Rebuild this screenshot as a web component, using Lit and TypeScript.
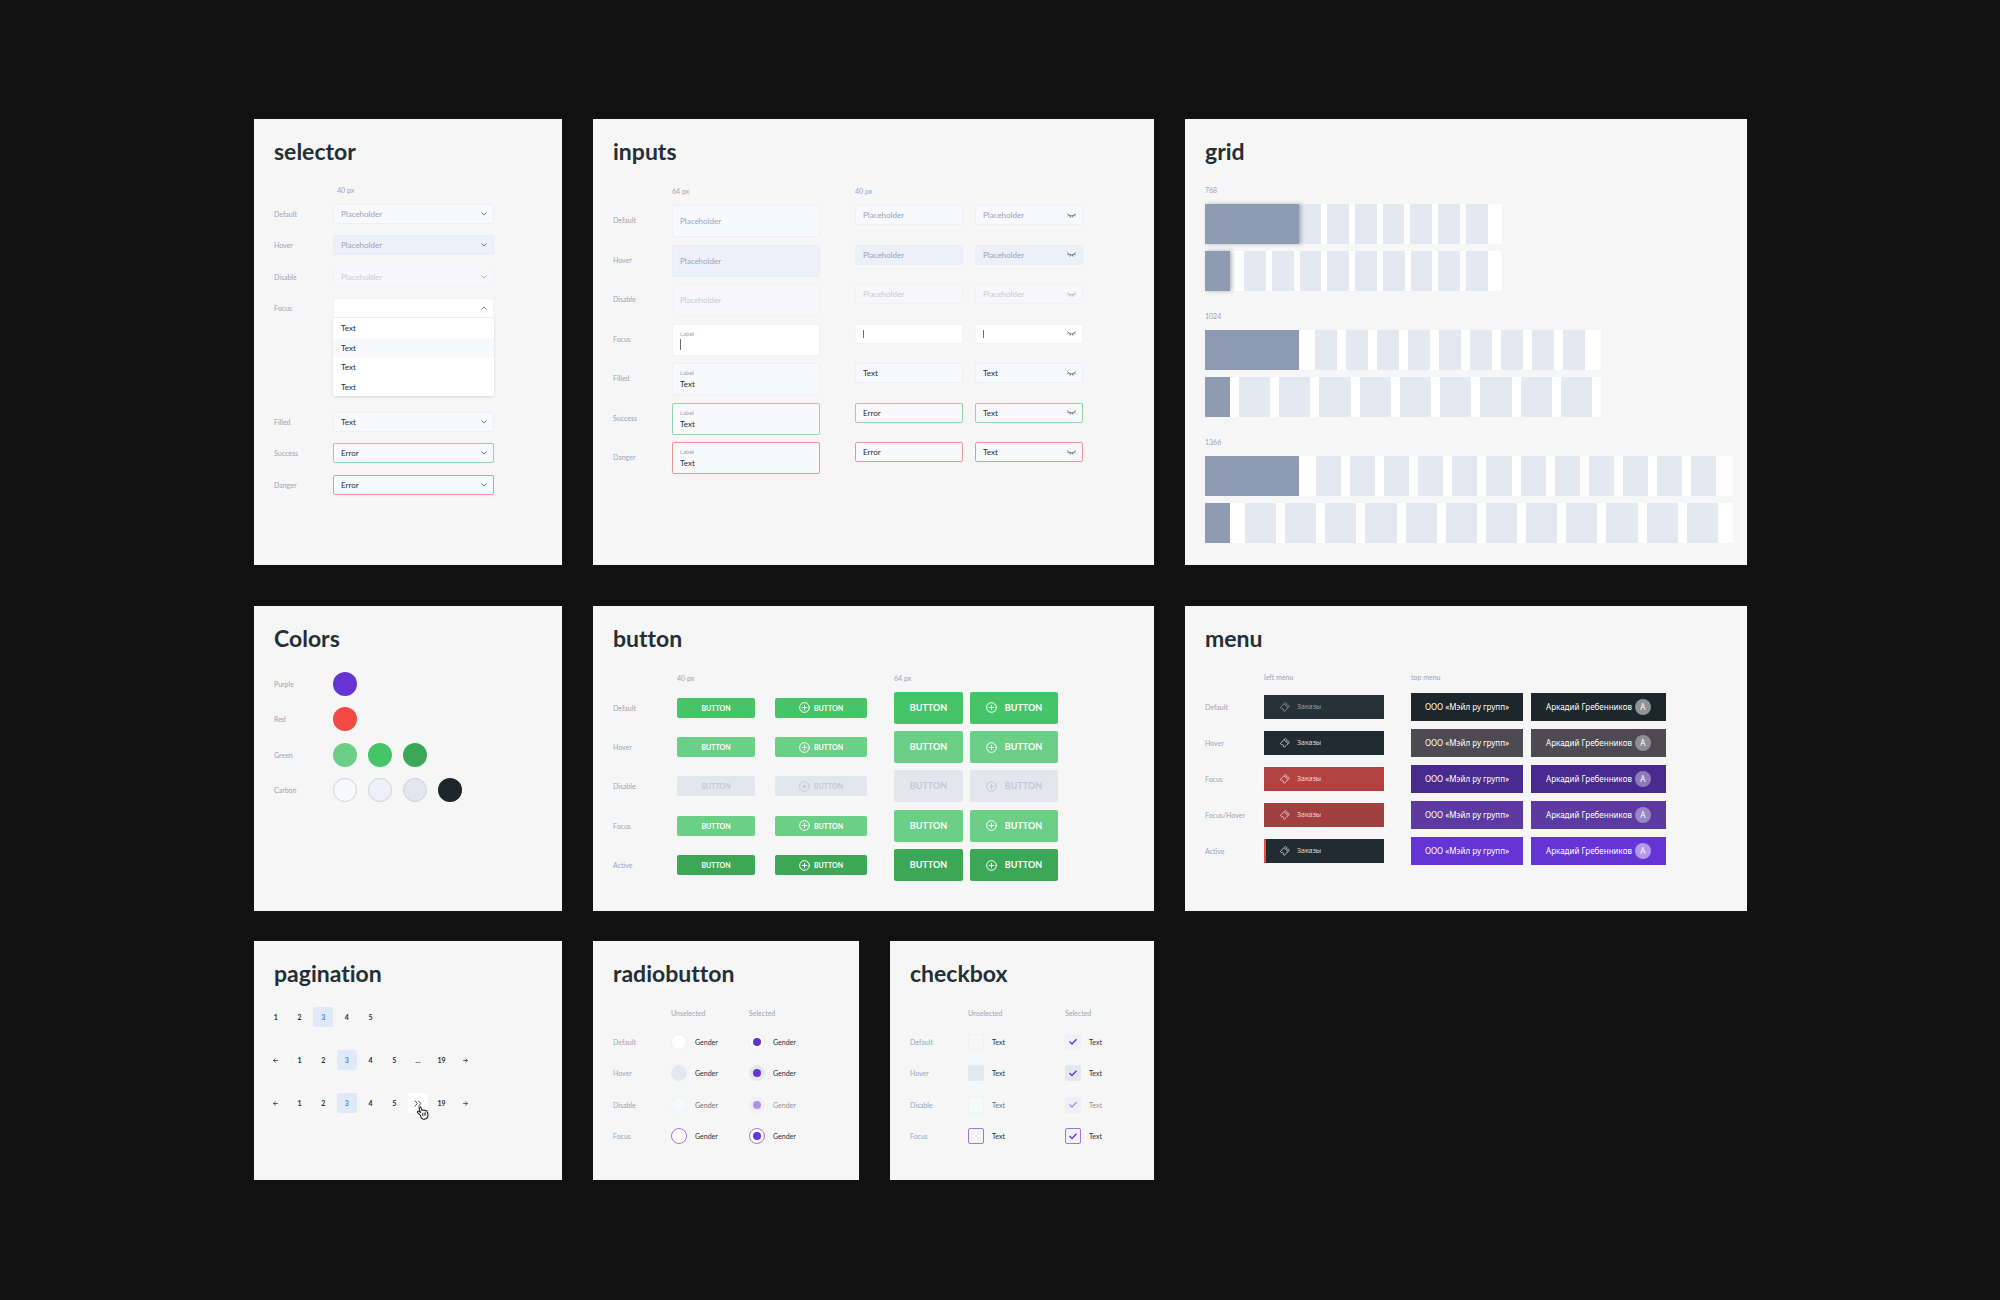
import { LitElement, html, css, svg, nothing } from "lit";
import { customElement } from "lit/decorators.js";
import { classMap } from "lit/directives/class-map.js";
import { styleMap } from "lit/directives/style-map.js";

type Field = { label: string; state: string; value?: string; small?: string; masked?: string };

const fields: Field[] = [
  { label: "Default", state: "default" },
  { label: "Hover", state: "hover" },
  { label: "Disable", state: "disable" },
  { label: "Focus", state: "focus", value: "" },
  { label: "Filled", state: "filled", value: "Text", small: "Text", masked: "Text" },
  { label: "Success", state: "success", value: "Text", small: "Error", masked: "Text" },
  { label: "Danger", state: "danger", value: "Text", small: "Error", masked: "Text" },
];

const breakpoints = [
  {
    name: "768",
    width: 297,
    raised: true,
    bars: [
      { side: 94, count: 7, gap: 6, left: 0, right: 14 },
      { side: 25, count: 9, gap: 6, left: 14, right: 14 },
    ],
  },
  {
    name: "1024",
    width: 396,
    raised: false,
    bars: [
      { side: 94, count: 9, gap: 9, left: 16, right: 16 },
      { side: 25, count: 9, gap: 9, left: 9, right: 9 },
    ],
  },
  {
    name: "1366",
    width: 528,
    raised: false,
    bars: [
      { side: 94, count: 12, gap: 9, left: 17, right: 17 },
      { side: 25, count: 12, gap: 9, left: 15, right: 15 },
    ],
  },
];

const swatches = [
  { label: "Purple", colors: ["#6633d4"] },
  { label: "Red", colors: ["#f24a43"] },
  { label: "Green", colors: ["#6bd086", "#45c567", "#3ba757"] },
  { label: "Carbon", colors: ["#f8f9fd", "#edf0f8", "#e4e6ee", "#1c262b"] },
];

const buttonStates = ["Default", "Hover", "Disable", "Focus", "Active"];
const menuStates = [
  { label: "Default", state: "default" },
  { label: "Hover", state: "hover" },
  { label: "Focus", state: "focus" },
  { label: "Focus/Hover", state: "focus-hover" },
  { label: "Active", state: "active" },
];
const choiceStates = ["Default", "Hover", "Disable", "Focus"];

const chevron = svg`<path d="M1.5 1.5 6 6l4.500-4.500" fill="none" stroke="currentColor" stroke-width="1.600" stroke-linecap="round" stroke-linejoin="round"/>`;

const plusIcon = html`<svg class="plus" viewBox="0 0 22 22" aria-hidden="true">
  <g fill="none" stroke="currentColor" stroke-width="2" stroke-linecap="round">
    <circle cx="11" cy="11" r="9.700" />
    <path d="M11 6.500v9M6.500 11h9" />
  </g>
</svg>`;

const eyeIcon = html`<svg viewBox="0 0 18 10" aria-hidden="true">
  <g fill="none" stroke="currentColor" stroke-width="1.600" stroke-linecap="round">
    <path d="M1 1.500C3 4.400 5.600 5.800 9 5.800s6-1.400 8-4.300" />
    <path d="M3.200 3.800 1.300 5.600M6.800 5.800 6.100 8.500M11.200 5.800l.7 2.700M14.800 3.800l1.900 1.800" />
  </g>
</svg>`;

const ticketIcon = html`<svg class="ticket" viewBox="0 0 20 20" aria-hidden="true">
  <g fill="none" stroke="currentColor" stroke-width="1.600" stroke-linejoin="round" stroke-linecap="round">
    <path d="M11.500 1.200 13.600 3.300a1.900 1.900 0 0 0 2.700 2.700l2.500 2.500L8.600 18.700l-2.300-2.300a1.900 1.900 0 0 0-2.700-2.700L1.200 11.400z" />
    <path d="M8.900 4.200l6.800 6.800" />
  </g>
</svg>`;

const arrow = (back: boolean) => html`<svg class="arrow" viewBox="0 0 10 10" aria-hidden="true">
  <path
    d=${back ? "M9 5H1.500M4.800 1.500 1.300 5l3.500 3.500" : "M1 5h7.500M5.200 1.500 8.700 5 5.200 8.500"}
    fill="none" stroke="currentColor" stroke-width="1.500" stroke-linecap="round" stroke-linejoin="round"
  />
</svg>`;

const skipIcon = html`<svg class="skip" viewBox="0 0 14 12" aria-hidden="true">
  <path d="M1.500 1l4.500 5-4.500 5M7.500 1 12 6l-4.500 5" fill="none" stroke="currentColor" stroke-width="1.500" />
</svg>`;

const handIcon = html`<svg class="hand" viewBox="0 0 24 26" aria-hidden="true">
  <path
    d="M8.500 17.500 3.200 12.600c-1.700-1.800.4-4 2.300-2.700l2.800 2.200L5.600 3.900c-.6-2.300 2.500-3.200 3.400-1l2.400 5.400c.8-1.400 2.700-1.200 3.300.1.900-1.100 2.600-.8 3.100.6 1-.8 2.600-.3 2.900 1.100l1.400 5.200c.7 3.600-.9 6.900-3.900 8.400-3.600 1.600-7.300.6-9-2.300z"
    fill="#fff" stroke="#222" stroke-width="2" stroke-linejoin="round"
  />
  <path d="M12.300 13.500v4.500M15.200 13v4.500M18 12.500v4.500" stroke="#222" stroke-width="1.500" stroke-linecap="round" />
</svg>`;

@customElement("app-root")
export class AppRoot extends LitElement {
  static styles = css`
    :host {
      display: block;
      box-sizing: border-box;
      min-height: 100vh;
      padding: 119px 253px 119px 254px;
      background: #111;
      color: #242f35;
      font-family: Lato, "Noto Sans", sans-serif;
      font-size: 8px;
      line-height: 12px;
      font-variant-ligatures: none;
    }
    *,
    *::before,
    *::after {
      box-sizing: border-box;
    }
    h2,
    ul {
      margin: 0;
      padding: 0;
    }
    .board {
      display: grid;
      grid-template-columns: minmax(0, 308fr) minmax(0, 561fr) minmax(0, 562fr);
      column-gap: 31px;
    }
    .board.second {
      margin-top: 41px;
    }
    .board.third {
      margin-top: 30px;
    }
    .pair {
      display: grid;
      grid-template-columns: minmax(0, 266fr) minmax(0, 264fr);
      column-gap: 31px;
    }
    .panel {
      background: #f6f6f6;
      padding: 19px 0 22px 20px;
    }
    .panel.tall {
      padding-bottom: 26px;
    }
    .panel.roomy {
      padding-bottom: 28px;
    }
    .title {
      font-size: 23px;
      line-height: 27px;
      font-weight: 700;
    }
    .caption,
    .name {
      color: #9aa3ba;
      font-size: 7px;
      line-height: 12px;
    }
    .name {
      align-self: center;
    }
    .head {
      display: grid;
      margin-top: 19px;
    }
    .rows {
      display: grid;
      grid-auto-rows: 1fr;
      align-items: center;
    }

    /* selector */
    .select-cols {
      grid-template-columns: 59px 161px;
    }
    .select-head {
      padding-left: 63px;
    }
    .four {
      min-height: 126px;
      margin-top: 2px;
    }
    .after-menu {
      min-height: 95px;
      margin-top: 82px;
    }
    .field {
      position: relative;
      display: flex;
      align-items: center;
      height: 20px;
      border: 1px solid #eef0f8;
      border-radius: 2px;
      background: #f8f9fd;
      color: #242f35;
    }
    .field input,
    .field select {
      appearance: none;
      flex: 1;
      min-width: 0;
      height: 100%;
      margin: 0;
      padding: 0 7px;
      border: 0;
      outline: 0;
      background: none;
      color: inherit;
      font: inherit;
      opacity: 1;
    }
    .field input::placeholder {
      color: #97a2bb;
      opacity: 1;
    }
    .field select.blank {
      color: #97a2bb;
    }
    .field svg {
      position: absolute;
      right: 6px;
      width: 9px;
      height: 5px;
      color: #4a5560;
      pointer-events: none;
    }
    .field .chevron {
      width: 6px;
      height: 4px;
    }
    .field .flip {
      transform: rotate(180deg);
    }
    .field.hover {
      background: #edf0f8;
      border-color: #e9edf7;
    }
    .field.disable {
      opacity: 0.5;
    }
    .field.focus {
      background: #fff;
      border-color: #f2f3f6;
    }
    .field.success {
      border-color: #8ed6a4;
    }
    .field.danger {
      border-color: #ee9296;
    }
    .menu {
      position: absolute;
      z-index: 1;
      top: 19px;
      left: -1px;
      right: -1px;
      display: grid;
      grid-auto-rows: 1fr;
      min-height: 78px;
      list-style: none;
      background: #fff;
      border-radius: 2px;
      box-shadow: 0 1px 3px rgba(36, 47, 53, 0.16);
    }
    .menu li {
      display: flex;
      align-items: center;
      padding: 0 8px;
    }
    .menu .current {
      background: #f8f9fd;
    }

    /* inputs */
    .input-cols {
      grid-template-columns: 59px 148px 35px 108px 12px 108px;
    }
    .input-rows {
      min-height: 277px;
      margin-top: 8px;
      align-items: start;
    }
    .input-rows .name {
      align-self: start;
      line-height: 31px;
    }
    .second-small {
      grid-column: 6;
    }
    .small {
      grid-column: 4;
    }
    .big {
      height: 32px;
    }
    .big.labelled {
      flex-direction: column;
      align-items: stretch;
      justify-content: center;
    }
    .big.labelled label {
      padding: 0 7px;
      color: #9aa3ba;
      font-size: 6px;
      line-height: 10px;
    }
    .big.labelled input {
      flex: none;
      height: 12px;
    }
    .caret {
      position: absolute;
      left: 7px;
      top: 5px;
      width: 1px;
      height: 8px;
      background: #6d7379;
    }
    .big .caret {
      top: 14px;
      height: 11px;
    }

    /* grid */
    .breakpoint {
      display: grid;
      margin-top: 19px;
    }
    .bars {
      display: grid;
      gap: 7px;
      margin-top: 8px;
    }
    .bar {
      display: flex;
      height: 40px;
      background: #fff;
    }
    .side {
      flex: none;
      background: #8f9ab3;
    }
    .side.raised {
      z-index: 1;
      box-shadow: 2px 0 4px rgba(60, 72, 100, 0.4);
    }
    .columns {
      display: grid;
      flex: 1;
      grid-auto-flow: column;
      grid-auto-columns: 1fr;
    }
    .columns span {
      background: #e4e8f1;
    }

    /* colors */
    .swatch-rows {
      min-height: 142px;
      margin-top: 14px;
      grid-template-columns: 59px 1fr;
    }
    .swatches {
      display: flex;
      gap: 11px;
    }
    .swatch {
      width: 24px;
      height: 24px;
      border-radius: 50%;
    }
    .swatch.outlined {
      border: 1px solid #cfd2da;
    }

    /* buttons */
    .button-cols {
      grid-template-columns: 64px 78px 20px 92px 27px 69px 7px 88px;
    }
    .btn-head {
      margin-top: 20px;
    }
    .button-rows {
      min-height: 197px;
      margin-top: 4px;
    }
    .btn {
      display: flex;
      align-items: center;
      justify-content: center;
      gap: 4px;
      height: 20px;
      margin: 0;
      padding: 0;
      border: 0;
      border-radius: 2px;
      background: #45c567;
      color: #fff;
      font: 700 7px/12px Lato, sans-serif;
    }
    .btn.large {
      height: 32px;
      gap: 8px;
      font-size: 9px;
    }
    .btn.hover,
    .btn.focus {
      background: #6bd086;
    }
    .btn.active {
      background: #3ba757;
    }
    .btn.disable {
      background: #e4e6ee;
      color: #c3c8d6;
    }
    .plus {
      width: 11px;
      height: 11px;
    }
    .c3 {
      grid-column: 4;
    }
    .c4 {
      grid-column: 6;
    }
    .c5 {
      grid-column: 8;
    }

    /* menu */
    .menu-cols {
      grid-template-columns: 59px 120px 27px 112px 8px 135px;
    }
    .menu-rows {
      min-height: 180px;
      margin-top: 6px;
    }
    .link {
      display: flex;
      align-items: center;
      color: #fff;
      text-decoration: none;
      white-space: nowrap;
      font-family: "Noto Sans", sans-serif;
    }
    .left {
      height: 24px;
      padding-left: 16px;
      gap: 7px;
      background: #202c31;
      color: #d9dcde;
      font-size: 7px;
    }
    .left.default {
      background: #263238;
      color: #96a0a6;
    }
    .left.focus {
      background: #b24141;
      color: #f5d9d9;
    }
    .left.focus-hover {
      background: #a04040;
      color: #f0d6d6;
    }
    .left.active {
      padding-left: 14px;
      border-left: 2px solid #f24a43;
    }
    .ticket {
      width: 10px;
      height: 10px;
    }
    .top {
      height: 28px;
      justify-content: center;
      gap: 3px;
      background: #1c262b;
    }
    .top.hover {
      background: #4d4a52;
    }
    .top.focus {
      background: #492a8f;
    }
    .top.focus-hover {
      background: #5c3a9f;
    }
    .top.active {
      background: #6633d4;
    }
    .avatar {
      display: grid;
      place-items: center;
      width: 16px;
      height: 16px;
      border-radius: 50%;
      background: rgba(255, 255, 255, 0.5);
    }
    .hover .avatar,
    .focus .avatar,
    .focus-hover .avatar {
      background: rgba(255, 255, 255, 0.38);
    }

    /* pagination */
    .pages {
      display: grid;
      gap: 23px;
      margin: 20px 0 0 -10px;
      max-width: 213px;
    }
    .page-row {
      display: grid;
      grid-template-columns: repeat(9, 1fr);
      justify-items: center;
    }
    .page {
      position: relative;
      display: flex;
      align-items: center;
      justify-content: center;
      width: 20px;
      height: 20px;
      padding: 0;
      border: 0;
      border-radius: 2px;
      background: none;
      color: #242f35;
      font: 700 7px/12px Lato, sans-serif;
    }
    .page.current {
      background: #dfe9f7;
      color: #4c84e0;
    }
    .page.lifted {
      background: #fff;
    }
    .arrow {
      width: 5px;
      height: 5px;
    }
    .skip {
      width: 8px;
      height: 7px;
    }
    .hand {
      position: absolute;
      left: 8px;
      top: 13px;
      width: 13px;
      height: 14px;
    }

    /* radio and checkbox */
    .choice-head {
      margin-top: 20px;
    }
    .choice-rows {
      min-height: 126px;
      margin-top: 7px;
    }
    .radio-cols {
      grid-template-columns: 58px 78px 1fr;
    }
    .check-cols {
      grid-template-columns: 58px 97px 1fr;
    }
    .choice {
      display: flex;
      align-items: center;
      gap: 8px;
      font-size: 7px;
    }
    .choice input {
      appearance: none;
      display: grid;
      place-items: center;
      width: 16px;
      height: 16px;
      margin: 0;
      border: 1px solid #eef0f5;
      border-radius: 2px;
      background: #f6f6f7;
      color: #6633d4;
    }
    .choice input[type="radio"] {
      border-radius: 50%;
      background: #fff;
    }
    .choice input[type="radio"]:checked::before {
      content: "";
      width: 8px;
      height: 8px;
      border-radius: 50%;
      background: currentColor;
    }
    .choice input[type="checkbox"]:checked {
      background: #f1f1fa;
    }
    .choice input[type="checkbox"]:checked::before {
      content: "";
      width: 8px;
      height: 7px;
      background: currentColor;
      clip-path: polygon(0 54%, 12% 40%, 37% 68%, 88% 8%, 100% 22%, 38% 96%);
    }
    .choice.hover input,
    .choice.hover input:checked {
      background: #e4e8f1;
      border-color: #e4e8f1;
    }
    .choice.disable.off input {
      background: #f7fafb;
      border-color: #f0f3f6;
    }
    .choice.disable.off {
      color: #6d757a;
    }
    .choice.disable.on {
      opacity: 0.5;
    }
    .choice.disable.on input {
      background: #ebe8f6;
      border-color: #ebe8f6;
    }
    .choice.focus input {
      border-color: #9a78dc;
    }
  `;

  private select(f: Field) {
    const open = f.state === "focus";
    const text = { filled: "Text", success: "Error", danger: "Error", focus: "" }[f.state] ?? "Placeholder";
    return html`
      <label class="name" for="select-${f.state}">${f.label}</label>
      <div class="field ${f.state}">
        <select id="select-${f.state}" class=${text === "Placeholder" ? "blank" : ""} ?disabled=${f.state === "disable"}>
          <option>${text}</option>
        </select>
        <svg class=${classMap({ chevron: true, flip: open })} viewBox="0 0 12 8" aria-hidden="true">${chevron}</svg>
        ${open
          ? html`<ul class="menu" role="listbox" aria-label="Options">
              ${[0, 1, 2, 3].map(
                (i) => html`<li role="option" aria-selected=${i === 1} class=${i === 1 ? "current" : ""}>Text</li>`
              )}
            </ul>`
          : nothing}
      </div>
    `;
  }

  private inputRow(f: Field) {
    const off = f.state === "disable";
    const focus = f.state === "focus";
    const hint = f.value === undefined ? "Placeholder" : "";
    const id = `input-${f.state}`;
    const caret = focus ? html`<span class="caret"></span>` : nothing;
    return html`
      <span class="name" id="${id}-name">${f.label}</span>
      <div class="field big ${f.state} ${hint ? "" : "labelled"}">
        ${hint ? nothing : html`<label for=${id}>Label</label>`}
        <input id=${id} type="text" aria-labelledby=${hint ? `${id}-name` : nothing} placeholder=${hint} .value=${f.value ?? ""} ?disabled=${off} />
        ${caret}
      </div>
      <div class="field small ${f.state}">
        <input type="text" aria-labelledby="${id}-name" placeholder=${hint} .value=${f.small ?? ""} ?disabled=${off} />
        ${caret}
      </div>
      <div class="field second-small ${f.state}">
        <input type="text" aria-labelledby="${id}-name" placeholder=${hint} .value=${f.masked ?? ""} ?disabled=${off} />
        ${caret} ${eyeIcon}
      </div>
    `;
  }

  private buttonRow(label: string) {
    const state = label.toLowerCase();
    const off = state === "disable";
    return html`
      <span class="name">${label}</span>
      <button class="btn ${state}" ?disabled=${off}>BUTTON</button>
      <button class="btn c3 ${state}" ?disabled=${off}>${plusIcon}BUTTON</button>
      <button class="btn large c4 ${state}" ?disabled=${off}>BUTTON</button>
      <button class="btn large c5 ${state}" ?disabled=${off}>${plusIcon}BUTTON</button>
    `;
  }

  private choice(type: string, label: string, text: string, on: boolean) {
    const state = label.toLowerCase();
    return html`<label class="choice ${state} ${on ? "on" : "off"}">
      <input type=${type} name="${type}-${state}-${on}" ?checked=${on} ?disabled=${state === "disable"} />${text}
    </label>`;
  }

  private choices(type: string, text: string, cols: string) {
    return html`
      <div class="head choice-head ${cols}">
        <span></span><span class="caption">Unselected</span><span class="caption">Selected</span>
      </div>
      <div class="rows choice-rows ${cols}">
        ${choiceStates.map(
          (s) => html`<span class="name">${s}</span>${this.choice(type, s, text, false)}${this.choice(type, s, text, true)}`
        )}
      </div>
    `;
  }

  private pageRow(items: string[]) {
    return html`<nav class="page-row" aria-label="Pages">
      ${items.map((p) => {
        const cls = classMap({ page: true, current: p === "3", lifted: p === "skip" });
        if (p === "prev" || p === "next")
          return html`<button class=${cls} aria-label=${p === "prev" ? "Previous" : "Next"}>${arrow(p === "prev")}</button>`;
        if (p === "skip") return html`<button class=${cls} aria-label="Skip forward">${skipIcon}${handIcon}</button>`;
        return html`<button class=${cls}>${p}</button>`;
      })}
    </nav>`;
  }

  render() {
    return html`
      <div class="board">
        <section class="panel">
          <h2 class="title">selector</h2>
          <div class="head select-head"><span class="caption">40 px</span></div>
          <div class="rows select-cols four">${fields.slice(0, 4).map((f) => this.select(f))}</div>
          <div class="rows select-cols after-menu">${fields.slice(4).map((f) => this.select(f))}</div>
        </section>

        <section class="panel">
          <h2 class="title">inputs</h2>
          <div class="head choice-head input-cols">
            <span></span><span class="caption">64 px</span><span></span><span class="caption">40 px</span>
          </div>
          <div class="rows input-cols input-rows">${fields.map((f) => this.inputRow(f))}</div>
        </section>

        <section class="panel">
          <h2 class="title">grid</h2>
          ${breakpoints.map(
            (b) => html`<div class="breakpoint">
              <span class="caption">${b.name}</span>
              <div class="bars" style=${styleMap({ width: `${b.width}px` })}>
                ${b.bars.map(
                  (r) => html`<div class="bar">
                    <div class=${classMap({ side: true, raised: b.raised })} style=${styleMap({ width: `${r.side}px` })}></div>
                    <div class="columns" style=${styleMap({ gap: `${r.gap}px`, margin: `0 ${r.right}px 0 ${r.left}px` })}>
                      ${Array.from({ length: r.count }, () => html`<span></span>`)}
                    </div>
                  </div>`
                )}
              </div>
            </div>`
          )}
        </section>
      </div>

      <div class="board second">
        <section class="panel">
          <h2 class="title">Colors</h2>
          <div class="rows swatch-rows">
            ${swatches.map(
              (s) => html`<span class="name">${s.label}</span>
                <div class="swatches">
                  ${s.colors.map(
                    (c, i) => html`<span
                      class=${classMap({ swatch: true, outlined: s.label === "Carbon" && i < 3 })}
                      style=${styleMap({ background: c })}
                    ></span>`
                  )}
                </div>`
            )}
          </div>
        </section>

        <section class="panel tall">
          <h2 class="title">button</h2>
          <div class="head btn-head button-cols">
            <span></span><span class="caption">40 px</span><span class="caption c4">64 px</span>
          </div>
          <div class="rows button-cols button-rows">${buttonStates.map((s) => this.buttonRow(s))}</div>
        </section>

        <section class="panel">
          <h2 class="title">menu</h2>
          <div class="head menu-cols">
            <span></span><span class="caption">left menu</span><span></span><span class="caption">top menu</span>
          </div>
          <div class="rows menu-cols menu-rows">
            ${menuStates.map(
              (m) => html`<span class="name">${m.label}</span>
                <a class="link left ${m.state}" href="#orders">${ticketIcon}Заказы</a>
                <a class="link top c3 ${m.state}" href="#company">ООО «Мэйл ру групп»</a>
                <a class="link top c4 ${m.state}" href="#profile">Аркадий Гребенников<span class="avatar">А</span></a>`
            )}
          </div>
        </section>
      </div>

      <div class="board third">
        <section class="panel">
          <h2 class="title">pagination</h2>
          <div class="pages">
            ${this.pageRow(["1", "2", "3", "4", "5"])}
            ${this.pageRow(["prev", "1", "2", "3", "4", "5", "...", "19", "next"])}
            ${this.pageRow(["prev", "1", "2", "3", "4", "5", "skip", "19", "next"])}
          </div>
        </section>
        <div class="pair">
          <section class="panel roomy">
            <h2 class="title">radiobutton</h2>
            ${this.choices("radio", "Gender", "radio-cols")}
          </section>
          <section class="panel roomy">
            <h2 class="title">checkbox</h2>
            ${this.choices("checkbox", "Text", "check-cols")}
          </section>
        </div>
      </div>
    `;
  }
}
